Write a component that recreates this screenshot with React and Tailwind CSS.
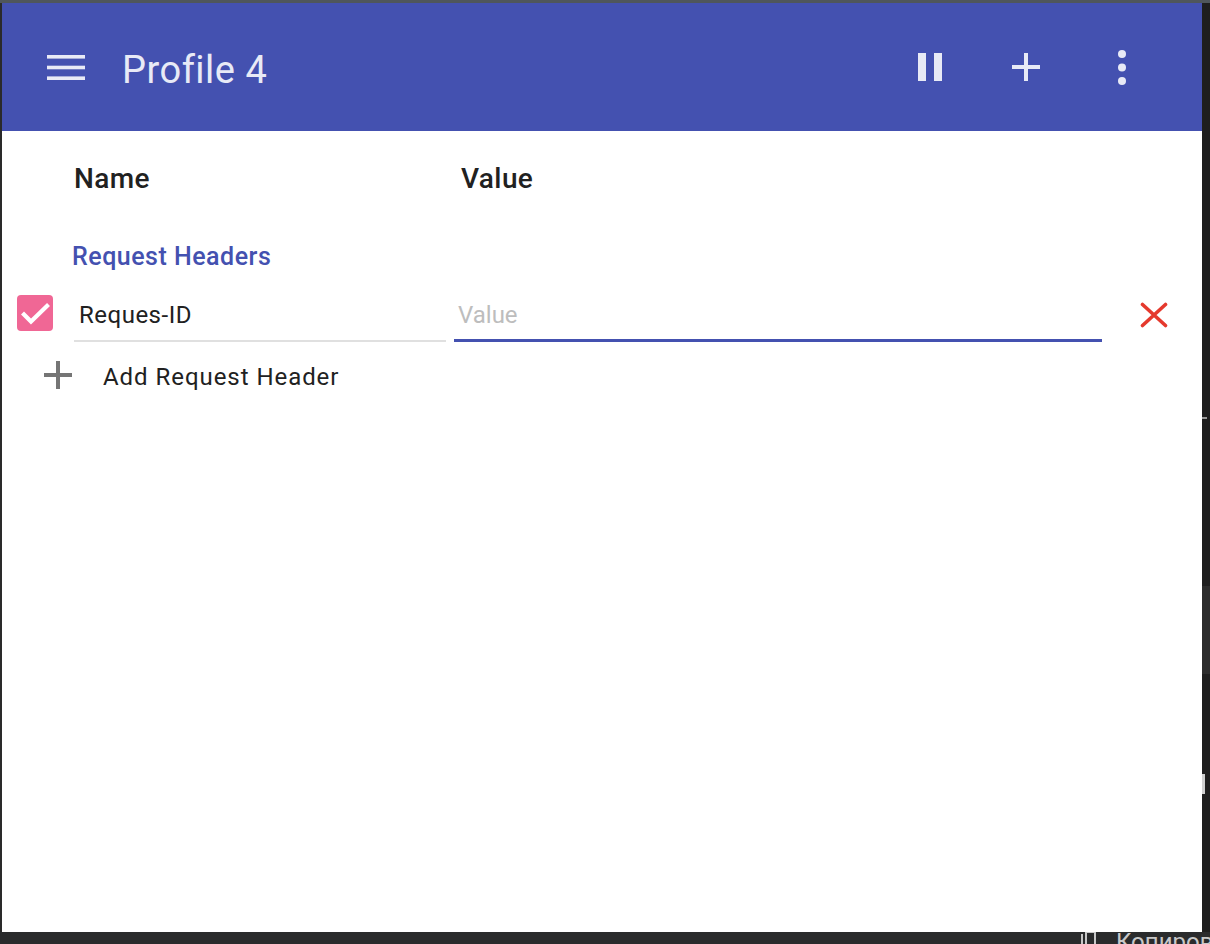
export default function App() {
  return (
    <div className="w-[1210px] h-[944px] bg-[#1f1f1f] flex flex-col overflow-hidden font-[Roboto,sans-serif]">
      <div className="h-[3px] bg-[#4f565b] shrink-0" />
      <div className="flex h-[929px] shrink-0">
        <div className="w-[2px] bg-[#2a2a2a]" />
        <div className="w-[1200px] bg-white flex flex-col">
          {/* App bar */}
          <div className="h-[128px] bg-[#4451b0] flex items-center pl-[45px] pr-[76px] text-[#e8eaf6] shrink-0">
            <svg width="38" height="25" viewBox="0 0 38 25" fill="#e8eaf6">
              <rect x="0" y="0" width="38" height="3.6" />
              <rect x="0" y="10.7" width="38" height="3.6" />
              <rect x="0" y="21.4" width="38" height="3.6" />
            </svg>
            <span className="ml-[37px] mt-[5px] text-[38px] leading-none tracking-[0.5px]">Profile 4</span>
            <div className="ml-auto flex items-center">
              <svg width="24" height="28" viewBox="0 0 24 28" fill="#e8eaf6">
                <rect x="0" y="0" width="8" height="28" />
                <rect x="16" y="0" width="8" height="28" />
              </svg>
              <svg className="ml-[70px]" width="28" height="28" viewBox="0 0 28 28" fill="#e8eaf6">
                <rect x="12" y="0" width="4" height="28" />
                <rect x="0" y="12" width="28" height="4" />
              </svg>
              <svg className="ml-[78px]" width="8" height="35" viewBox="0 0 8 35" fill="#e8eaf6">
                <circle cx="4" cy="4" r="4" />
                <circle cx="4" cy="17.5" r="4" />
                <circle cx="4" cy="31" r="4" />
              </svg>
            </div>
          </div>

          {/* Column headings */}
          <div className="mt-[32px] flex text-[28px] font-medium leading-[32px] text-[#212121] tracking-[0.4px]">
            <div className="ml-[72px] w-[387px]">Name</div>
            <div>Value</div>
          </div>

          <div className="mt-[47px] ml-[70px] text-[25px] font-medium leading-[30px] text-[#4451b0] tracking-[0.5px]">
            Request Headers
          </div>

          {/* Header row */}
          <div className="mt-[23px] flex items-start h-[47px]">
            <div className="ml-[15px] w-[36px] h-[36px] rounded-[4px] bg-[#f06795] shrink-0">
              <svg width="36" height="36" viewBox="0 0 36 36">
                <polyline points="7,19.5 14,26.5 30,11" fill="none" stroke="#ffffff" strokeWidth="4.2" strokeLinecap="square" />
              </svg>
            </div>
            <div className="ml-[21px] w-[372px] h-[47px] border-b-2 border-[#e0e0e0] pl-[5px] pt-[6px] text-[24px] leading-[28px] text-[#212121] tracking-[0.5px] shrink-0">
              Reques-ID
            </div>
            <div className="ml-[8px] w-[648px] h-[47px] border-b-[3px] border-[#4451b0] pl-[4px] pt-[6px] text-[24px] leading-[28px] text-[#bdbdbd] shrink-0">
              Value
            </div>
            <svg className="ml-[38px] mt-[7px] shrink-0" width="28" height="26" viewBox="0 0 28 26">
              <path d="M2.5 2.5 L25.5 23.5 M25.5 2.5 L2.5 23.5" stroke="#e5392d" strokeWidth="3.6" strokeLinecap="round" />
            </svg>
          </div>

          {/* Add row */}
          <div className="mt-[19px] flex items-start">
            <svg className="ml-[42px] shrink-0" width="28" height="28" viewBox="0 0 28 28" fill="#757575">
              <rect x="12" y="0" width="4" height="28" />
              <rect x="0" y="12" width="28" height="4" />
            </svg>
            <div className="ml-[31px] mt-[2px] text-[24px] leading-[28px] text-[#212121] tracking-[0.95px]">
              Add Request Header
            </div>
          </div>
        </div>
        <div className="w-[8px] bg-[#1e1e1e] flex flex-col">
          <div className="h-[414px]" />
          <div className="h-[2px] w-[5px] bg-[#9a9a9a]" />
          <div className="h-[167px]" />
          <div className="h-[88px] bg-[#2c2c2c]" />
          <div className="h-[100px]" />
          <div className="h-[20px] w-[3px] bg-[#cfcfcf]" />
        </div>
      </div>
      <div className="h-[12px] bg-[#2a2b2c] shrink-0 overflow-hidden flex items-start">
        <div className="ml-[1080px] mt-[-2px] flex items-start text-[#c8c8c8]">
          <svg width="18" height="24" viewBox="0 0 18 24" fill="none" stroke="#c8c8c8" strokeWidth="2">
            <path d="M2 4 V22 H12 M6 2 H15 V18 H6 Z" />
          </svg>
          <span className="ml-[18px] text-[24px] leading-[24px] whitespace-nowrap">Копировать</span>
        </div>
      </div>
    </div>
  );
}
